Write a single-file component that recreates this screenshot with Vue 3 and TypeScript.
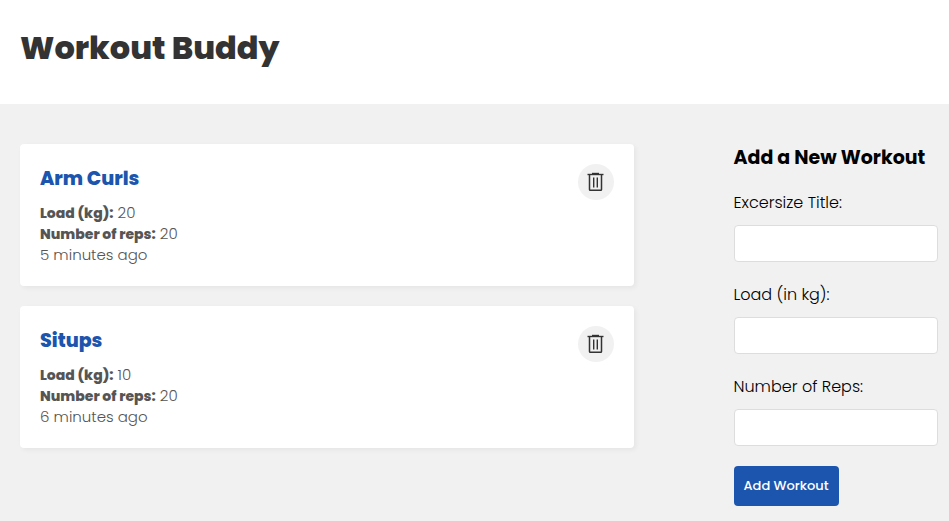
<script setup lang="ts">
import { reactive, ref } from 'vue'

interface Workout {
  id: number
  title: string
  load: number
  reps: number
  created: string
}

const workouts = ref<Workout[]>([
  { id: 1, title: 'Arm Curls', load: 20, reps: 20, created: '5 minutes ago' },
  { id: 2, title: 'Situps', load: 10, reps: 20, created: '6 minutes ago' },
])

const form = reactive({ title: '', load: '', reps: '' })

function removeWorkout(id: number): void {
  workouts.value = workouts.value.filter((w) => w.id !== id)
}

function addWorkout(): void {
  if (!form.title || !form.load || !form.reps) return
  workouts.value.unshift({
    id: Date.now(),
    title: form.title,
    load: Number(form.load),
    reps: Number(form.reps),
    created: 'just now',
  })
  form.title = form.load = form.reps = ''
}
</script>

<template>
  <div class="app">
    <header class="header">
      <h1>Workout Buddy</h1>
    </header>
    <main class="home">
      <section class="workouts">
        <article v-for="w in workouts" :key="w.id" class="card">
          <div class="details">
            <h2>{{ w.title }}</h2>
            <p><strong>Load (kg):</strong> {{ w.load }}</p>
            <p><strong>Number of reps:</strong> {{ w.reps }}</p>
            <p>{{ w.created }}</p>
          </div>
          <button class="remove" type="button" aria-label="Delete workout" @click="removeWorkout(w.id)">
            <svg width="18" height="20" viewBox="0 0 18 20" fill="none" stroke="#333" aria-hidden="true">
              <path d="M.5 2.5h16" stroke-width="1.4" />
              <path d="M5 1.5h7" stroke-width="1.4" />
              <path d="M2.5 3v14.5q0 .8.8.8h10.4q.8 0 .8-.8V3" stroke-width="1.5" />
              <path d="M6.7 5.5v10M10.3 5.5v10" stroke-width="1.4" />
            </svg>
          </button>
        </article>
      </section>
      <form class="create" @submit.prevent="addWorkout">
        <h3>Add a New Workout</h3>
        <label for="title">Excersize Title:</label>
        <input id="title" v-model="form.title" type="text" />
        <label for="load">Load (in kg):</label>
        <input id="load" v-model="form.load" type="text" inputmode="numeric" />
        <label for="reps">Number of Reps:</label>
        <input id="reps" v-model="form.reps" type="text" inputmode="numeric" />
        <button class="submit" type="submit">Add Workout</button>
      </form>
    </main>
  </div>
</template>

<style>
body {
  background: #f1f1f1;
}
</style>

<style scoped>
.app {
  font-family: Poppins, Inter, sans-serif;
  font-size: 16px;
}
h1, h2, h3, p {
  margin: 0;
}
.header {
  padding: 24px 20px 32px;
  background: #fff;
}
h1 {
  font-size: 32px;
  line-height: 48px;
  font-weight: 800;
  color: #333;
}
.home {
  display: grid;
  grid-template-columns: 3fr 1fr;
  gap: 100px;
  padding: 40px 11px 15px 20px;
}
.workouts {
  display: flex;
  flex-direction: column;
  gap: 20px;
}
.card {
  display: flex;
  justify-content: space-between;
  align-items: flex-start;
  padding: 20px 20px 21px;
  background: #fff;
  border-radius: 4px;
  box-shadow: 2px 2px 5px rgba(0, 0, 0, 0.05);
}
h2 {
  margin-bottom: 8px;
  font-size: 19px;
  line-height: 30px;
  font-weight: 800;
  color: #1b55ae;
}
.details p {
  font-size: 15px;
  line-height: 21px;
  font-weight: 300;
  color: #555;
}
.details strong {
  font-size: 14px;
  line-height: 1;
  font-weight: 800;
}
.remove {
  display: flex;
  align-items: center;
  justify-content: center;
  width: 36px;
  height: 36px;
  padding: 0;
  border: 0;
  border-radius: 50%;
  background: #f1f1f1;
  cursor: pointer;
}
.create {
  display: flex;
  flex-direction: column;
  min-width: 0;
}
h3 {
  margin-bottom: 18px;
  font-size: 19px;
  line-height: 28px;
  font-weight: 700;
  color: #000;
  white-space: nowrap;
}
label {
  margin-bottom: 10px;
  line-height: 25px;
  font-weight: 300;
  color: #000;
}
input {
  box-sizing: border-box;
  width: 100%;
  height: 37px;
  margin-bottom: 20px;
  padding: 10px;
  border: 1px solid #ddd;
  border-radius: 4px;
  background: #fff;
  font: inherit;
}
.submit {
  align-self: flex-start;
  padding: 10px;
  border: 0;
  border-radius: 4px;
  background: #1b55ae;
  color: #fff;
  font-family: inherit;
  font-size: 13px;
  line-height: 20px;
  font-weight: 500;
  white-space: nowrap;
  cursor: pointer;
}
</style>
